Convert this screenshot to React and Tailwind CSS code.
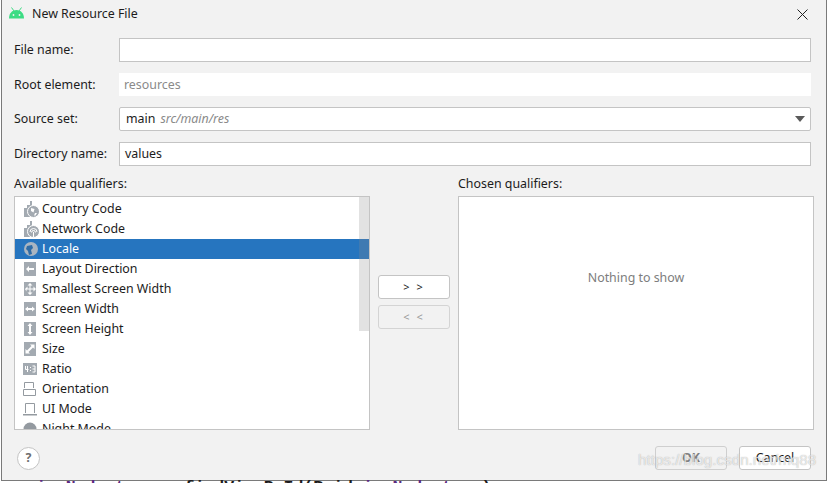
import React from "react";

const font = { fontFamily: '"Noto Sans", "Open Sans", sans-serif' };

function Square({ children }) {
  return (
    <svg width="14" height="14" viewBox="0 0 14 14" className="block">
      <rect x="1" y="0" width="12" height="14" fill="#a3aab1" />
      {children}
    </svg>
  );
}

function Cell({ children }) {
  return (
    <svg width="16" height="18" viewBox="0 0 16 18" className="block">
      <path d="M1 8h3V5h3V1h2v5H8v11H1z" fill="#a3aab1" />
      <circle cx="10.500" cy="11.500" r="6" fill="#a3aab1" stroke="#fff" />
      {children}
    </svg>
  );
}

const qualifiers = [
  {
    name: "Country Code",
    icon: (
      <Cell>
        <path d="M8 8l3.500 1-1 3.500-2.500-1.500zM12 13h2l-1.500 2.500H11z" fill="#fff" />
      </Cell>
    ),
  },
  {
    name: "Network Code",
    icon: (
      <Cell>
        <path d="M7 12a3.500 3.500 0 0 1 7 0M8.500 12.500a2 2 0 0 1 4 0M10.500 12v5" stroke="#fff" fill="none" />
      </Cell>
    ),
  },
  {
    name: "Locale",
    selected: true,
    icon: (
      <svg width="16" height="16" viewBox="0 0 16 16" className="block">
        <circle cx="8" cy="8" r="7" fill="#a9b5c1" />
        <path d="M4 5l5-1 1 3-2 2 1 4-3 1-1-4-2-2z" fill="#2f6ca6" />
      </svg>
    ),
  },
  {
    name: "Layout Direction",
    icon: (
      <Square>
        <path d="M3 7l3-3v2h5v2H6v2z" fill="#fff" />
      </Square>
    ),
  },
  {
    name: "Smallest Screen Width",
    icon: (
      <Square>
        <path d="M7 1l2.500 2.500h-2v3h3v-2L13 7l-2.500 2.500v-2h-3v3h2L7 13l-2.500-2.500h2v-3h-3v2L2 7l2.500-2.500v2h2v-3h-2z" fill="#fff" />
      </Square>
    ),
  },
  {
    name: "Screen Width",
    icon: (
      <Square>
        <path d="M2 7l3-2.500V6h4V4.500L12 7 9 9.500V8H5v1.500z" fill="#fff" />
      </Square>
    ),
  },
  {
    name: "Screen Height",
    icon: (
      <Square>
        <path d="M7 1l2.500 3H8v6h1.500L7 13l-2.500-3H6V4H4.500z" fill="#fff" />
      </Square>
    ),
  },
  {
    name: "Size",
    icon: (
      <Square>
        <path d="M7 2.500h4.500V7L10 5.500 5.500 10 7 11.500H2.500V7L4 8.500 8.500 4z" fill="#fff" />
      </Square>
    ),
  },
  {
    name: "Ratio",
    icon: (
      <svg width="14" height="12" viewBox="0 0 14 12" className="block">
        <rect width="14" height="12" fill="#a3aab1" />
        <path d="M2.500 3v3.500h3M4.500 3v6M7.500 4v1M7.500 7v1M9.500 3h2.500v6H9.500M9.500 6H12" stroke="#fff" fill="none" />
      </svg>
    ),
  },
  {
    name: "Orientation",
    icon: (
      <svg width="14" height="16" viewBox="0 0 14 16" className="block">
        <path d="M1.500 7V1.500h9V7M.5 8.500h12v6H.5z" stroke="#949aa0" fill="none" />
      </svg>
    ),
  },
  {
    name: "UI Mode",
    icon: (
      <svg width="14" height="14" viewBox="0 0 14 14" className="block">
        <path d="M2.500 11V1.500h9V11" stroke="#949aa0" fill="none" />
        <path d="M0 12h14v1.500H0z" fill="#949aa0" />
      </svg>
    ),
  },
  {
    name: "Night Mode",
    icon: (
      <svg width="14" height="14" viewBox="0 0 14 14" className="block">
        <circle cx="7" cy="7" r="6.500" fill="#949aa0" />
      </svg>
    ),
  },
];

function Field({ label, labelClass = "", children }) {
  return (
    <div className="flex items-center">
      <div className={`w-[105px] shrink-0 ${labelClass}`}>{label}</div>
      {children}
    </div>
  );
}

export default function App() {
  return (
    <div className="relative w-[827px] h-[483px] overflow-hidden bg-white text-[12.4px] text-[#1c1c1c]" style={font}>
      <div className="ml-px w-[824px] h-[480px] flex flex-col border-l border-r border-b border-[#7a7a7a] bg-[#f2f2f2] box-content">
        {/* title bar */}
        <div className="flex items-center h-[27px] pl-[6px] pr-[18px] pt-[1px]">
          <svg width="17" height="12" viewBox="0 0 17 12" className="block mr-[7px] mb-[2px]">
            <path d="M1 11.500C1 6.500 4 3 8.500 3S16 6.500 16 11.500z" fill="#3ddc84" />
            <path d="M3.500 0.500L6 4M13.500 0.500L11 4" stroke="#3ddc84" strokeWidth="1" />
            <circle cx="5.500" cy="8" r="0.900" fill="#f2f2f2" />
            <circle cx="11.500" cy="8" r="0.900" fill="#f2f2f2" />
          </svg>
          <span className="flex-1">New Resource File</span>
          <svg width="11" height="11" viewBox="0 0 11 11" className="block">
            <path d="M.5.5l10 10M10.500.5l-10 10" stroke="#222" />
          </svg>
        </div>

        {/* form */}
        <div className="flex flex-col gap-[11px] pt-[11px] pl-3 pr-[15px]">
          <Field label="File name:">
            <div className="h-6 flex-1 bg-white border border-[#c4c4c4]" />
          </Field>
          <Field label="Root element:" labelClass="pt-[2px]">
            <div className="h-[23px] flex-1 bg-white flex items-center pl-[5px] pt-[2px] text-[#8a8a8a]">resources</div>
          </Field>
          <Field label="Source set:">
            <div className="h-6 flex-1 bg-white border border-[#c4c4c4] rounded-[2px] flex items-center pl-[6px] pr-[5px]">
              <span>main</span>
              <span className="ml-[5px] italic text-[#8a8a8a] flex-1">src/main/res</span>
              <svg width="10" height="6" viewBox="0 0 10 6" className="block">
                <path d="M0 0h10L5 6z" fill="#5a5a5a" />
              </svg>
            </div>
          </Field>
          <Field label="Directory name:">
            <div className="h-6 flex-1 bg-white border border-[#c4c4c4] flex items-center pl-[5px]">values</div>
          </Field>
        </div>

        {/* qualifiers */}
        <div className="flex pt-[9px] pl-3 h-[264px]">
          <div className="w-[356px] flex flex-col">
            <div className="h-[21px] leading-[17px]">Available qualifiers:</div>
            <div className="relative h-[234px] bg-white border border-[#c4c4c4] overflow-hidden pt-[2px]">
              {qualifiers.map((q) => (
                <div
                  key={q.name}
                  className={`flex items-center h-5 pl-[8px] ${q.selected ? "bg-[#2675bf] text-white" : ""}`}
                >
                  <div className="w-[19px] shrink-0 flex items-center">{q.icon}</div>
                  <span>{q.name}</span>
                </div>
              ))}
              <div className="absolute right-0 top-0 w-[10px] h-[134px] bg-[#8c8c8c]/25" />
            </div>
          </div>
          <div className="w-[88px] flex flex-col items-center gap-[6px] pt-[100px]">
            <div className="w-[72px] h-6 bg-white border border-[#c4c4c4] rounded-[3px] flex items-center justify-center text-[11px] tracking-[2px]">&gt; &gt;</div>
            <div className="w-[72px] h-6 border border-[#d4d4d4] rounded-[3px] flex items-center justify-center text-[11px] tracking-[2px] text-[#9a9a9a]">&lt; &lt;</div>
          </div>
          <div className="w-[356px] flex flex-col">
            <div className="h-[21px] leading-[17px]">Chosen qualifiers:</div>
            <div className="h-[234px] bg-white border border-[#c4c4c4] flex items-center justify-center pb-[70px] text-[#7d7d7d]">Nothing to show</div>
          </div>
        </div>

        {/* footer */}
        <div className="flex items-center pl-[15px] pr-[15px] pt-4">
          <div className="w-[23px] h-[23px] rounded-full bg-white border border-[#c4c4c4] flex items-center justify-center font-bold text-[#6e6e6e]">?</div>
          <div className="flex-1" />
          <div className="w-[72px] h-6 border border-[#cfcfcf] rounded-[3px] flex items-center justify-center font-bold text-[#808080]">OK</div>
          <div className="ml-3 w-[72px] h-6 bg-white border border-[#c4c4c4] rounded-[3px] flex items-center justify-center">Cancel</div>
        </div>
      </div>

      {/* code behind the dialog */}
      <div className="absolute left-[36px] top-[478px] leading-[20px] font-bold text-[16.5px] text-[#1c1c1c] whitespace-nowrap" style={{ fontFamily: '"Liberation Mono", monospace' }}>
        <span className="text-[#5a2a82]">in Node tree</span> = findViewById(R.id.<span className="text-[#5a2a82]">in Node tree</span>);
      </div>

      {/* watermark */}
      <div className="absolute left-[638px] top-[449px] text-[15.2px] text-white/70 [text-shadow:0_0_1px_rgba(110,110,110,0.6)] whitespace-nowrap" style={{ fontFamily: '"Liberation Sans", sans-serif' }}>
        https://blog.csdn.net/mq88
      </div>
    </div>
  );
}
